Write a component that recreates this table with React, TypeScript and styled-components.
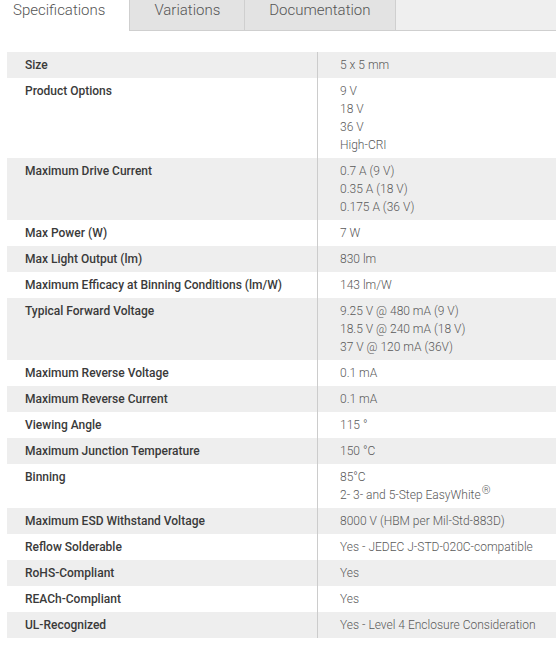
import React from 'react';
import styled, { createGlobalStyle } from 'styled-components';

const Sup = styled.sup`
  font-size: 11px;
  line-height: 0;
  vertical-align: 5px;
  margin-left: 1px;
`;

const specs: { label: string; values: React.ReactNode[] }[] = [
  { label: 'Size', values: ['5 x 5 mm'] },
  { label: 'Product Options', values: ['9 V', '18 V', '36 V', 'High-CRI'] },
  { label: 'Maximum Drive Current', values: ['0.7 A (9 V)', '0.35 A (18 V)', '0.175 A (36 V)'] },
  { label: 'Max Power (W)', values: ['7 W'] },
  { label: 'Max Light Output (lm)', values: ['830 lm'] },
  { label: 'Maximum Efficacy at Binning Conditions (lm/W)', values: ['143 lm/W'] },
  {
    label: 'Typical Forward Voltage',
    values: ['9.25 V @ 480 mA (9 V)', '18.5 V @ 240 mA (18 V)', '37 V @ 120 mA (36V)'],
  },
  { label: 'Maximum Reverse Voltage', values: ['0.1 mA'] },
  { label: 'Maximum Reverse Current', values: ['0.1 mA'] },
  { label: 'Viewing Angle', values: ['115 °'] },
  { label: 'Maximum Junction Temperature', values: ['150 °C'] },
  {
    label: 'Binning',
    values: ['85°C', <>2- 3- and 5-Step EasyWhite<Sup>®</Sup></>],
  },
  { label: 'Maximum ESD Withstand Voltage', values: ['8000 V (HBM per Mil-Std-883D)'] },
  { label: 'Reflow Solderable', values: ['Yes - JEDEC J-STD-020C-compatible'] },
  { label: 'RoHS-Compliant', values: ['Yes'] },
  { label: 'REACh-Compliant', values: ['Yes'] },
  { label: 'UL-Recognized', values: ['Yes - Level 4 Enclosure Consideration'] },
];

const tabs = ['Specifications', 'Variations', 'Documentation'];

export default function App() {
  return (
    <>
      <GlobalStyle />
      <TabBar>
        {tabs.map((t, i) => (
          <Tab key={t} $active={i === 0} $first={i === 0}>
            {t}
          </Tab>
        ))}
      </TabBar>
      <SpecTable>
        <tbody>
          {specs.map((s, i) => (
            <Row key={s.label} $shaded={i % 2 === 0}>
              <Label>{s.label}</Label>
              <Value>
                {s.values.map((v, j) => (
                  <Line key={j}>{v}</Line>
                ))}
              </Value>
            </Row>
          ))}
        </tbody>
      </SpecTable>
    </>
  );
}

const GlobalStyle = createGlobalStyle`
  body {
    margin: 0;
    background: #fff;
    font-family: Roboto, "Liberation Sans", sans-serif;
    overflow: hidden;
  }
`;

const TabBar = styled.div`
  display: flex;
  height: 30px;
  background: #efefef;
  border-bottom: 1px solid #cfcfcf;
`;

const Tab = styled.div<{ $active?: boolean; $first?: boolean }>`
  height: ${p => (p.$active ? '31px' : '30px')};
  box-sizing: border-box;
  padding: ${p => (p.$first ? '0 24px 0 13px' : '0 24px')};
  line-height: 20px;
  font-size: 15px;
  font-weight: 300;
  color: #555;
  background: ${p => (p.$active ? '#fff' : '#e3e3e3')};
  border-right: 1px solid #cfcfcf;
  margin-bottom: ${p => (p.$active ? '-1px' : '0')};
`;

const SpecTable = styled.table`
  margin: 21px 0 0 7px;
  width: 549px;
  border-collapse: collapse;
  font-size: 12px;
`;

const Row = styled.tr<{ $shaded?: boolean }>`
  background: ${p => (p.$shaded ? '#eeeeee' : '#fff')};
`;

const Label = styled.td`
  width: 292px;
  padding: 4px 0 4px 18px;
  vertical-align: top;
  line-height: 18px;
  font-weight: 500;
  color: #3a3a3a;
  border-right: 1px solid #cccccc;
`;

const Value = styled.td`
  padding: 4px 0 4px 22px;
  vertical-align: top;
  line-height: 18px;
  font-weight: 300;
  color: #5a5a5a;
`;

const Line = styled.div``;
